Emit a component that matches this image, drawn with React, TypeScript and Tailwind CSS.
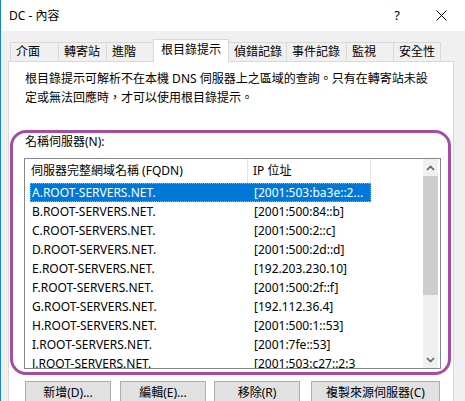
import React from 'react';

const tabs = [
  { label: '介面', cls: 'w-[49px]' },
  { label: '轉寄站', cls: 'w-[49px] -ml-px' },
  { label: '進階', cls: 'w-[48px] -ml-px' },
  { label: '根目錄提示', cls: 'w-[76px] -ml-px', active: true },
  { label: '偵錯記錄', cls: 'w-[59px] -ml-px' },
  { label: '事件記錄', cls: 'w-[61px] -ml-px' },
  { label: '監視', cls: 'w-[48px] -ml-px' },
  { label: '安全性', cls: 'w-[48px] -ml-px' },
];

const servers = [
  ['A.ROOT-SERVERS.NET.', '[2001:503:ba3e::2...'],
  ['B.ROOT-SERVERS.NET.', '[2001:500:84::b]'],
  ['C.ROOT-SERVERS.NET.', '[2001:500:2::c]'],
  ['D.ROOT-SERVERS.NET.', '[2001:500:2d::d]'],
  ['E.ROOT-SERVERS.NET.', '[192.203.230.10]'],
  ['F.ROOT-SERVERS.NET.', '[2001:500:2f::f]'],
  ['G.ROOT-SERVERS.NET.', '[192.112.36.4]'],
  ['H.ROOT-SERVERS.NET.', '[2001:500:1::53]'],
  ['I.ROOT-SERVERS.NET.', '[2001:7fe::53]'],
  ['J.ROOT-SERVERS.NET.', '[2001:503:c27::2:3'],
];

function TitleBar() {
  return (
    <div className="h-[31px] shrink-0 bg-white flex items-center pl-[8px]">
      <span className="leading-[19px]">DC - 內容</span>
      <span className="ml-auto leading-[19px] text-[13px]">?</span>
      {/* close glyph */}
      <svg className="ml-[36px] mr-[18px]" width="11" height="11" viewBox="0 0 11 11">
        <path d="M0.5 0.5 L10.5 10.5 M10.5 0.5 L0.5 10.5" stroke="#000" strokeWidth="1" fill="none" />
      </svg>
    </div>
  );
}

function TabStrip() {
  return (
    <div className="flex items-end h-[22px] pl-[2px]">
      {tabs.map((t) =>
        t.active ? (
          <div
            key={t.label}
            className={`${t.cls} relative z-10 h-[23px] -mb-px bg-white border border-b-0 border-[#d9d9d9] pl-[7px] leading-[19px] whitespace-nowrap`}
          >
            {t.label}
          </div>
        ) : (
          <div
            key={t.label}
            className={`${t.cls} h-[19px] border border-b-0 border-[#d9d9d9] pl-[5px] leading-[18px] whitespace-nowrap`}
          >
            {t.label}
          </div>
        )
      )}
    </div>
  );
}

function Chevron({ up }: { up?: boolean }) {
  return (
    <svg width="9" height="6" viewBox="0 0 9 6">
      <path
        d={up ? 'M1 5 L4.5 1.5 L8 5' : 'M1 1 L4.5 4.5 L8 1'}
        stroke="#606060"
        strokeWidth="1.6"
        fill="none"
      />
    </svg>
  );
}

function ServerList() {
  return (
    <div className="mt-[7px] h-[211px] border border-[#828790] flex overflow-hidden bg-white">
      <div className="flex-1 flex flex-col overflow-hidden">
        <div className="h-[24px] shrink-0 flex">
          <div className="w-[223px] border-r border-[#e5e5e5] pl-[6px] flex items-center whitespace-nowrap">
            伺服器完整網域名稱 (FQDN)
          </div>
          <div className="w-[123px] border-r border-[#e5e5e5] pl-[5px] flex items-center whitespace-nowrap">
            IP 位址
          </div>
        </div>
        {servers.map(([name, ip], i) => (
          <div
            key={name}
            className={
              i === 0
                ? 'h-[19px] shrink-0 ml-[5px] w-[341px] flex items-center bg-[#0078d7] text-white outline-1 outline-dotted outline-[#f29a45] -outline-offset-1'
                : 'h-[19px] shrink-0 ml-[5px] w-[341px] flex items-center'
            }
          >
            <div className="w-[218px] pl-[2px] whitespace-nowrap">{name}</div>
            <div className="pl-[6px] whitespace-nowrap">{ip}</div>
          </div>
        ))}
      </div>
      <div className="w-[17px] pr-[2px] bg-white flex">
        <div className="flex-1 bg-[#f0f0f0] flex flex-col">
          <div className="h-[17px] flex items-center justify-center">
            <Chevron up />
          </div>
          <div className="h-[119px] bg-[#cdcdcd]" />
          <div className="flex-1" />
          <div className="h-[17px] flex items-center justify-center">
            <Chevron />
          </div>
        </div>
      </div>
    </div>
  );
}

function Button({ children, className }: { children: React.ReactNode; className: string }) {
  return (
    <div
      className={`${className} h-[23px] border border-[#adadad] bg-[#e1e1e1] flex items-center justify-center whitespace-nowrap`}
    >
      {children}
    </div>
  );
}

export default function App() {
  return (
    <div className="relative w-[465px] h-[401px] overflow-hidden bg-[#f0f0f0] border-l border-[#1883d7] font-['Noto_Sans','Noto_Sans_CJK_TC',sans-serif] text-[12px] text-black flex flex-col">
      <TitleBar />
      <div className="shrink-0 pl-[7px] pt-[8px]">
        <TabStrip />
        <div className="w-[446px] bg-white border border-[#d9d9d9] pl-[15px] pr-[12px] pt-[7px] pb-[20px]">
          <p className="leading-[19px] whitespace-nowrap pl-px">
            根目錄提示可解析不在本機 DNS 伺服器上之區域的查詢。只有在轉寄站未設
            <br />
            定或無法回應時，才可以使用根目錄提示。
          </p>
          <div className="mt-[25px] leading-[19px] pl-px">名稱伺服器(N):</div>
          <ServerList />
          <div className="mt-[12px] flex px-px">
            <Button className="w-[86px]">新增(D)...</Button>
            <Button className="w-[86px] ml-[9px]">編輯(E)...</Button>
            <Button className="w-[86px] ml-[8px]">移除(R)</Button>
            <Button className="w-[129px] ml-auto">複製來源伺服器(C)</Button>
          </div>
        </div>
      </div>
      {/* purple highlight drawn over the dialog */}
      <div className="absolute left-[9px] top-[130px] w-[441px] h-[245px] border-[3px] border-[#a54ca5] rounded-[16px] pointer-events-none" />
    </div>
  );
}
